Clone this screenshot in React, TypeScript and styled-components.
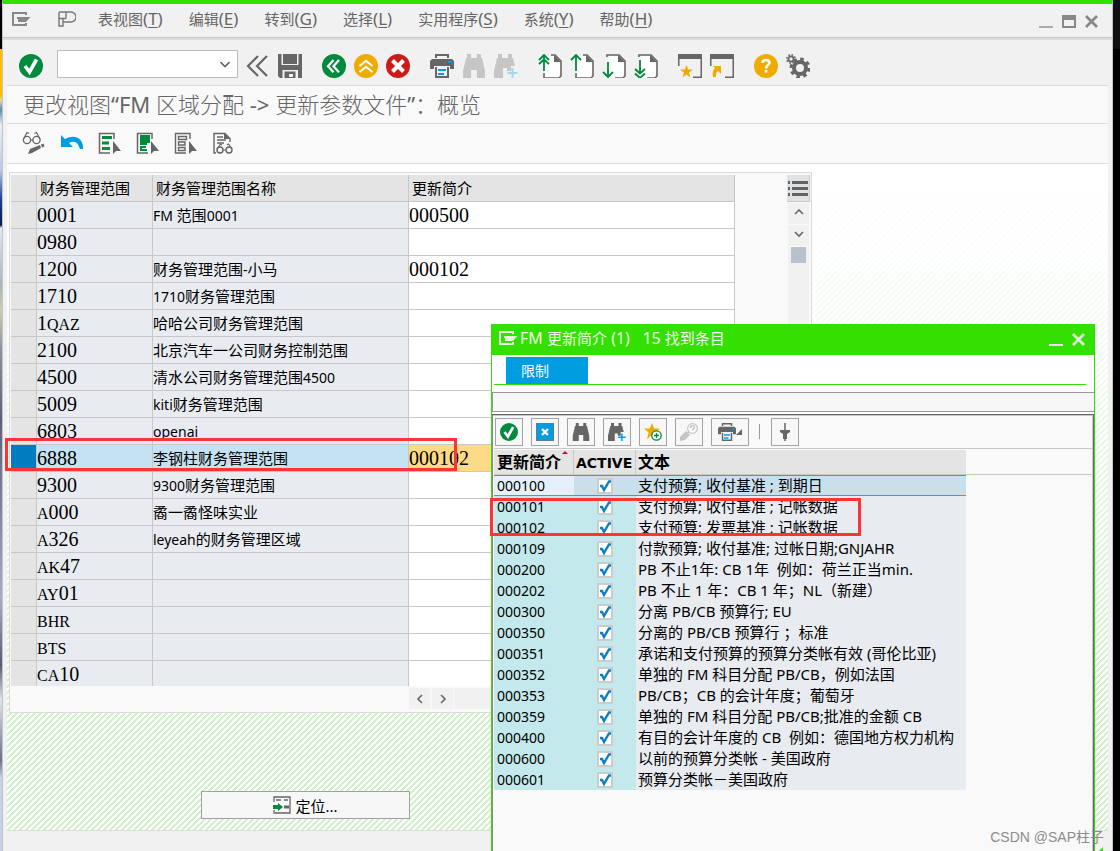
import React from 'react';
import styled, { createGlobalStyle, css } from 'styled-components';

const GREEN = '#33e000';
const INK = '#666';

const GlobalStyle = createGlobalStyle`
  * { box-sizing: border-box; }
  html { background: #000; }
  body {
    margin: 0;
    font-family: "Noto Sans", "Noto Sans CJK SC", sans-serif;
    font-size: 15px;
    color: #000;
  }
  button, input { font: inherit; color: inherit; margin: 0; }
  svg { display: block; flex: none; }
`;

/* ---------- text ---------- */

const Latin = styled.span<{ $size: number }>`
  font-size: ${p => p.$size}px;
  font-weight: 400;
`;

const CJK_SPLIT = /([\u2E80-\u9FFF\u3000-\u303F\uFF00-\uFFEF]+)/;

/* Latin runs are sized apart from the Chinese characters beside them. */
function Mixed({ text, latin = 14 }: { text: string; latin?: number }) {
  return (
    <>
      {text.split(CJK_SPLIT).map((run, i) =>
        i % 2 ? run : run && <Latin key={i} $size={latin}>{run}</Latin>
      )}
    </>
  );
}

const CodeText = styled.div`
  height: 24px;
  font: 20px/24px "Liberation Serif", serif;
`;
const CodeLetters = styled.span`
  font-size: 16px;
  line-height: 16px;
`;

function Code({ value }: { value: string }) {
  return (
    <CodeText>
      {value.split(/([A-Z]+)/).map((run, i) => (i % 2 ? <CodeLetters key={i}>{run}</CodeLetters> : run))}
    </CodeText>
  );
}

/* ---------- window frame ---------- */

const Desktop = styled.div`
  min-height: 100vh;
  display: flex;
  padding-right: 7px;
  background:
    linear-gradient(#111 0 49px, #000 49px) right / 7px 100% no-repeat,
    linear-gradient(#000 0 49px, #fdbf00 49px 96px, #e4d9b0 100px, #5f87b5 110px, #e9eef5 125px,
      #b8cbe6 170px, #1d3c8c 200px, #0c1c4c 225px, #dfe8f5 228px, #aab4bd 285px, #c8cfae 310px,
      #8b93a3 350px, #5a6478 420px, #79839a 500px, #a5aec0 600px, #555c70 665px, #dfe5ee 700px,
      #6a7286 760px, #c4d3ea 778px);
`;

const Window = styled.main`
  position: relative;
  flex: 1;
  min-width: 0;
  margin-left: 2px;
  display: flex;
  flex-direction: column;
  background: #f1f1f1;
  border: solid #c4c4c4;
  border-width: 4px 1px 0;
  border-top-color: ${GREEN};
`;

const MenuBar = styled.header`
  display: flex;
  align-items: center;
  height: 36px;
  padding: 0 14px 4px 9px;
  border-bottom: 2px solid #dcdcdc;
  box-shadow: inset 0 -1px 0 #c6c6c6;
  color: ${INK};
`;

const MenuList = styled.nav`
  display: flex;
  flex: 1;
  gap: 26px;
  margin-left: 22px;
`;

const PlainButton = styled.button`
  display: flex;
  align-items: center;
  justify-content: center;
  padding: 0;
  border: 0;
  background: none;
  white-space: nowrap;
`;

const MenuButton = styled(PlainButton)`
  line-height: 24px;
  u { text-underline-offset: 2px; }
`;

const LogoSlot = styled.div`
  margin-left: 27px;
`;

const Controls = styled.div`
  display: flex;
  align-items: center;
  gap: 9px;
  padding-top: 4px;
`;

const StandardBar = styled.div`
  display: flex;
  align-items: center;
  gap: 20px;
  height: 45px;
  padding: 6px 16px 0;
`;

const IconGroup = styled.div`
  display: flex;
  align-items: center;
  gap: 8px;
`;

const CommandGroup = styled(IconGroup)`
  > :first-child { margin-right: 6px; }
`;

const CommandBox = styled.div`
  display: flex;
  width: 181px;
  height: 28px;
  margin-top: -4px;
  background: #fff;
  border: 1px solid #bdbdbd;
`;

const CommandInput = styled.input`
  flex: 1;
  min-width: 0;
  border: 0;
  background: none;
  outline: none;
`;

const ArrowButton = styled(PlainButton)`
  width: 24px;
`;

const Client = styled.section`
  flex: 1;
  display: flex;
  flex-direction: column;
  margin: 0 4px;
  border: solid #dcdcdc;
  border-width: 1px 0;
`;

const Title = styled.h1`
  margin: 0;
  padding-left: 16px;
  height: 38px;
  border-bottom: 1px solid #dcdcdc;
  background: #f9f9f9;
  color: ${INK};
  font-size: 22px;
  line-height: 36px;
  font-weight: 300;
  white-space: pre;
`;

const AppBar = styled.div`
  display: flex;
  align-items: center;
  gap: 14px;
  height: 40px;
  padding: 0 0 2px 15px;
  border-bottom: 1px solid #dcdcdc;
  background: #f9f9f9;
`;

const Work = styled.div`
  flex: 1;
  padding: 8px 2px 11px;
  background:
    linear-gradient(#fff, rgba(255, 255, 255, 0.85) 20%, rgba(255, 255, 255, 0) 78%),
    linear-gradient(135deg, #d2f2cd 25%, #fff 25% 50%, #d2f2cd 50% 75%, #fff 75%) 0 0 / 6px 6px;
`;

const StatusBar = styled.footer`
  display: flex;
  justify-content: flex-end;
  align-items: flex-end;
  height: 22px;
  padding-right: 9px;
`;

/* ---------- main table ---------- */

const Panel = styled.div`
  display: grid;
  grid-template-columns: 724px 1fr 23px;
  width: 100%;
  max-width: 803px;
  padding: 2px 1px 1px;
  border: 1px solid #dadada;
  background: #f9f9f9;
`;

const GridTable = styled.table`
  width: 724px;
  table-layout: fixed;
  border-collapse: separate;
  border-spacing: 0;
  white-space: pre;
`;

const cell = css`
  height: 27px;
  padding: 0;
  border: solid #c8c8c8;
  border-width: 0 1px 1px 0;
  text-align: left;
  font-weight: 400;
  line-height: 24px;
`;

const HeadCell = styled.th`
  ${cell}
  padding-left: 3px;
  background: #e4e4e4;
`;

const Cell = styled.td<{ $bg?: string }>`
  ${cell}
  background: ${p => p.$bg || '#e8ecf0'};
`;

const BodyRow = styled.tr`
  &:last-child td { height: 25px; border-bottom: 0; }
`;

const RowSelector = styled(PlainButton)`
  width: 100%;
  height: 24px;
`;

const ProfileInput = styled.input`
  display: block;
  width: 100%;
  height: 24px;
  padding: 0;
  border: 0;
  background: none;
  outline: none;
  font: 20px/24px "Liberation Serif", serif;
`;

const VScroll = styled.div`
  display: flex;
  flex-direction: column;
  gap: 1px;
`;

const ScrollButton = styled(PlainButton)`
  width: 21px;
  height: 21px;
  margin-left: 1px;
  background: #f1f1f1;
`;

const ListButton = styled(ScrollButton)`
  width: 23px;
  height: 27px;
  margin-left: 0;
  padding-top: 2px;
  background: #e2e2e2;
  border: solid #c8c8c8;
  border-width: 0 1px 1px 0;
`;

const VTrack = styled.div`
  flex: 1;
  width: 21px;
  margin-left: 1px;
  padding: 0 3px;
  background: #f1f1f1;
`;

const Thumb = styled.div`
  height: 16px;
  background: #b8c2cc;
`;

const HScroll = styled.div`
  display: flex;
  gap: 1px;
  padding: 2px 0 2px 397px;
`;

const HTrack = styled.div`
  flex: 1;
  background: #f1f1f1;
`;

const GotoButton = styled.button`
  display: flex;
  align-items: center;
  justify-content: center;
  gap: 4px;
  width: 209px;
  height: 28px;
  margin: 78px 0 0 192px;
  padding: 0;
  border: 1px solid #a0a0a0;
  background: #f7f7f7;
`;

/* ---------- search help dialog ---------- */

const Dialog = styled.section`
  position: absolute;
  left: 488px;
  top: 320px;
  right: 17px;
  bottom: 0;
  display: flex;
  flex-direction: column;
  background: #fff;
  border: solid ${GREEN};
  border-width: 0 1px;
`;

const DialogTitle = styled.header`
  display: flex;
  align-items: center;
  height: 31px;
  padding: 0 9px 4px 7px;
  background: ${GREEN};
  color: #eefbe8;
  white-space: pre;
  h2 {
    flex: 1;
    margin: 0 0 0 2px;
    font-size: 15px;
    line-height: 24px;
    font-weight: 400;
  }
`;

const TabStrip = styled.div`
  margin: 0 8px 7px 2px;
  padding: 2px 0 0 12px;
  border-bottom: 1px solid ${GREEN};
`;

const Tab = styled(PlainButton)`
  justify-content: flex-start;
  width: 82px;
  height: 27px;
  padding: 0 0 2px 15px;
  background: #009de0;
  color: #fff;
  font-size: 14px;
`;

const Strip = styled.div`
  height: 20px;
  border: solid #999;
  border-width: 1px 0 1px 1px;
  background: #f7f7f7;
`;

const ResultFrame = styled.div`
  flex: 1;
  margin-top: 2px;
  border: 1px solid #666;
  border-bottom: 0;
  border-left-color: #8a8a8a;
  background: #f9f9f9;
  box-shadow: inset 0 1px 0 #c8c8c8, inset -1px 0 0 #c8c8c8;
`;

const ResultBar = styled.div`
  display: flex;
  align-items: center;
  gap: 8px;
  height: 34px;
  margin: 0 1px;
  padding: 1px;
  border-bottom: 1px solid #c8c8c8;
`;

const BoxButton = styled(PlainButton)<{ $wide?: boolean }>`
  width: ${p => (p.$wide ? 38 : 28)}px;
  height: 28px;
  border: 1px solid #a3a3a3;
  background: #f7f7f7;
`;

const Separator = styled.i`
  width: 1px;
  height: 15px;
  margin: 0 3px 0 2px;
  background: #999;
`;

const ResultScroll = styled.div`
  margin: 1px 1px 0;
  background: linear-gradient(#c8c8c8, #c8c8c8) 0 24px / 100% 1px no-repeat;
`;

const ResultTable = styled.table`
  width: 472px;
  table-layout: fixed;
  border-collapse: separate;
  border-spacing: 0;
  white-space: pre;
`;

const ResultHead = styled.th`
  height: 25px;
  padding: 0 0 0 2px;
  background: #e4e4e4;
  border: solid #c8c8c8;
  border-width: 0 1px 1px 0;
  text-align: left;
  font-size: 16px;
  line-height: 22px;
  font-weight: 700;
  &:last-child { border-right: 0; }
`;

const Active = styled.span`
  font: 700 14px/22px "DejaVu Sans", sans-serif;
`;

const SortHead = styled.div`
  display: flex;
  align-items: flex-start;
  padding-left: 1px;
  gap: 1px;
`;

const ResultCell = styled.td<{ $bg: string; $mark?: boolean }>`
  height: 21px;
  padding: 0 0 0 3px;
  background: ${p => p.$bg};
  line-height: 19px;
  &:nth-child(2) { padding: 0; }
  &:nth-child(3) { padding-left: 2px; }
  ${p => p.$mark && css`
    box-shadow: inset 0 1px 0 #d0703a, inset 0 -1px 0 #d0703a;
  `}
`;

const CheckWrap = styled.label`
  display: grid;
  width: 16px;
  margin: 1px auto 0;
  > * { grid-area: 1 / 1; }
  svg { pointer-events: none; }
`;

const CheckBox = styled.input`
  appearance: none;
  width: 16px;
  height: 16px;
  border: 2px solid #ccc;
  background: #fff;
`;

/* ---------- overlays ---------- */

const Marker = styled.div<{ $x: number; $y: number; $w: number; $h: number }>`
  position: absolute;
  left: ${p => p.$x}px;
  top: ${p => p.$y}px;
  width: ${p => p.$w}px;
  height: ${p => p.$h}px;
  border: 3px solid #fb3535;
  pointer-events: none;
`;

const Watermark = styled.div`
  position: absolute;
  right: 8px;
  bottom: 6px;
  color: #8c8c8c;
  font: 14px/20px "Liberation Sans", "Noto Sans CJK SC", sans-serif;
`;

/* ---------- icons ---------- */

type IconProps = { size?: number };
const Svg = ({ size = 24, children }: React.PropsWithChildren<IconProps>) => (
  <svg width={size} height={size} viewBox="0 0 24 24" fill="none">{children}</svg>
);

const ExitIcon = ({ color = '#888' }: { color?: string }) => (
  <svg width="19" height="14" viewBox="0 0 19 14" fill="none">
    <path d="M14 3V1H1v12h13v-2" stroke={color} strokeWidth="2" />
    <path d="M5 5h13.500l-4.500 5H6V7H5z" fill={color} />
  </svg>
);
const LogoIcon = () => (
  <svg width="18" height="16" viewBox="0 0 18 16" fill="none" stroke="#777" strokeWidth="1.4">
    <path d="M1 1h12a4.500 4.500 0 010 10H8M1 1v14h4V7.500M8 1v6.500M1 7.500h7M5 15v-4h4" />
  </svg>
);
const OkIcon = ({ size }: IconProps) => (
  <Svg size={size}><circle cx="12" cy="12" r="12" fill="#008a3b" /><path d="M6 12l4.500 6L17.500 5.500" stroke="#fff" strokeWidth="3.600" /></Svg>
);
const DoubleLeftIcon = () => (
  <Svg><path d="M12 2L2 12l10 10M21 2L11 12l10 10" stroke={INK} strokeWidth="2.200" /></Svg>
);
const SaveIcon = () => (
  <Svg><path d="M0 0h3.500v11h17V0H24v24h-4v-8H4.500v8H2l-2-2z" fill={INK} /><path d="M5 0h14v10H5z" fill={INK} /><path d="M6.500 24v-6.500h11V24h-2.500v-4h-4v3h5v1z" fill={INK} /></Svg>
);
const BackIcon = () => (
  <Svg><circle cx="12" cy="12" r="12" fill="#008a3b" /><path d="M11.500 6L6 12.200l5.500 6M17 6l-5.500 6.200 5.500 6" stroke="#fff" strokeWidth="2.300" /></Svg>
);
const UpIcon = () => (
  <Svg><circle cx="12" cy="12" r="12" fill="#f0ab00" /><path d="M5.500 12L12 7l6.500 5M5.500 18l6.500-5 6.500 5" stroke="#fff" strokeWidth="2.200" /></Svg>
);
const CancelIcon = () => (
  <Svg><circle cx="12" cy="12" r="12" fill="#cc1a1a" /><path d="M6.500 6.500l11 11m0-11l-11 11" stroke="#fff" strokeWidth="4" /></Svg>
);
const PrintIcon = ({ size }: IconProps) => (
  <Svg size={size}><path d="M5 0h14v4h-2V2H7v2H5zM2 5h20l2 2v8h-4v-3H4v3H0V7z" fill={INK} /><path d="M18 7h4v2h-4zM8 15h8v2H8zM8 19h6v2H8z" fill="#009de0" /><path d="M6 13v10h12V13" stroke={INK} strokeWidth="2" /></Svg>
);
const FindIcon = ({ size, color = '#c6c6c6' }: IconProps & { color?: string }) => (
  <Svg size={size}><path d="M5 0h4v4h6V0h4v4h1l3 13v7h-8v-8H9v8H1v-7L4 4h1z" fill={color} /></Svg>
);
const FindNextIcon = ({ size, color = '#c6c6c6', plus = '#9fd8f3' }: IconProps & { color?: string; plus?: string }) => (
  <Svg size={size}><path d="M4 0h4v4h6V0h4v4h1l2 8h-4v5h-4v-3H9v10H0v-7L3 4h1z" fill={color} /><path d="M18.500 14v10M13.500 19h10" stroke={plus} strokeWidth="2" /></Svg>
);
const PageIcon = ({ down, twice }: { down?: boolean; twice?: boolean }) => (
  <Svg>
    <path d="M7 2h12l5 5v17H6V12z" fill="#fff" />
    <path d={down ? 'M5 3V1h12l6 6v15l-2 2h-8' : 'M13 1h4l6 6v15l-2 2H6v-5'} stroke={INK} strokeWidth="1.600" />
    <path d="M16 1l7 7h-7z" fill={INK} />
    {down
      ? <path d={twice ? 'M6 6v13M1 15l5 4.500 5-4.500M1 19.500L6 24l5-4.500' : 'M6 8v15M1 18l5 5 5-5'} stroke="#008a3b" strokeWidth="1.800" />
      : <path d={twice ? 'M6 2v15M1 6l5-5 5 5M1 10l5-4.500L11 10' : 'M6 1v16M1 6l5-5 5 5'} stroke="#008a3b" strokeWidth="1.800" />}
  </Svg>
);
const WindowIcon = ({ link }: { link?: boolean }) => (
  <Svg>
    <path d="M0 0h24v24h-9v-1.500h7.500V5H1.500v7H0z" fill={INK} />
    {link
      ? <path d="M3 12h8v8l-3-3c-2 1-2 3-2 6H3c-1-4 0-7 2-9z" fill="#f0ab00" />
      : <path d="M8.500 11l1.600 4.500H15l-4 3 1.500 5-4-3-4 3 1.500-5-4-3h4.900z" fill="#f0ab00" />}
  </Svg>
);
const HelpIcon = () => (
  <Svg><circle cx="12" cy="12" r="12" fill="#f0ab00" /><path d="M8.500 9c0-4 7-4 7-.500 0 2.500-3.500 2.500-3.500 6M12 16v2.500" stroke="#fff" strokeWidth="2.600" /></Svg>
);
const GearIcon = () => (
  <Svg>
    <circle cx="14" cy="14" r="6" stroke={INK} strokeWidth="4" />
    <circle cx="14" cy="14" r="9" stroke={INK} strokeWidth="3" strokeDasharray="3.530 3.530" />
    <circle cx="5" cy="5" r="2.600" stroke={INK} strokeWidth="1.800" />
    <circle cx="5" cy="5" r="4.200" stroke={INK} strokeWidth="1.600" strokeDasharray="1.650 1.650" />
  </Svg>
);
const Chevron = ({ d }: { d: string }) => (
  <svg width="10" height="10" viewBox="0 0 10 10" fill="none"><path d={d} stroke="#666" strokeWidth="1.600" /></svg>
);
const GlassesEditIcon = () => (
  <Svg>
    <circle cx="5" cy="9" r="3.600" stroke={INK} strokeWidth="1.300" /><circle cx="14.500" cy="9" r="3.600" stroke={INK} strokeWidth="1.300" />
    <path d="M1.500 8L5 1.500l2 1M18 8l-3.500-6.500-2 1M8.500 9H11" stroke={INK} strokeWidth="1.200" />
    <path d="M6 23l2-5 10-4 1 3-9 5zM19 13.500l2.500-1 1 3-2.500 1z" fill={INK} />
  </Svg>
);
const UndoIcon = () => (
  <Svg><path d="M1 4v12h12l-4-4c5-3 9-1 11 6h3C24 9 16 2 5 8z" fill="#009de0" /></Svg>
);
const Pointer = () => <path d="M15 10v13l3-3h5z" fill={INK} />;
const SelectAllIcon = () => (
  <Svg><path d="M16 8V2.500H1.500V22H12" stroke={INK} strokeWidth="1.500" /><path d="M4 5h10v3H4zM4 10.500h7v3H4zM4 16h8v3H4z" fill="#008a3b" /><Pointer /></Svg>
);
const SelectBlockIcon = () => (
  <Svg><path d="M16 8V2.500H1.500V22H12" stroke={INK} strokeWidth="1.500" /><path d="M4 4h10v8h-3v2H4zM4 15h6v2H6v1h5v2H4z" fill="#008a3b" /><Pointer /></Svg>
);
const DeselectIcon = () => (
  <Svg><path d="M16 8V2.500H1.500V22H12M4.500 5.500h8v3h-8zM4.500 11h6.500v3H4.500zM4.500 16.500h6.500v3H4.500z" stroke={INK} strokeWidth="1.400" /><Pointer /></Svg>
);
const DocGlassesIcon = () => (
  <Svg>
    <path d="M4 22H2V2.500h11l5 5V11M5 6h6M5 9h9M5 12h7" stroke={INK} strokeWidth="1.400" /><path d="M12 2l6 6h-6z" fill={INK} />
    <circle cx="8" cy="19" r="3" stroke={INK} strokeWidth="1.400" /><circle cx="17" cy="19" r="3" stroke={INK} strokeWidth="1.400" />
    <path d="M5 18l3.500-5 1.500 1M20 18l-3.500-5-1.500 1M11 19h3" stroke={INK} strokeWidth="1.200" />
  </Svg>
);
const ListIcon = () => (
  <svg width="20" height="16" viewBox="0 0 20 16"><path d="M0 0h2v3H0zM4 0h16v3H4zM0 6h2v3H0zM4 6h16v3H4zM0 12h2v3H0zM4 12h16v3H4z" fill="#5f6468" /></svg>
);
const GotoIcon = () => (
  <svg width="18" height="18" viewBox="0 0 18 18" fill="none"><path d="M1 6V1h16v16H1v-3" stroke={INK} strokeWidth="1.300" /><path d="M3 4h5M11 4h4" stroke={INK} strokeWidth="1.500" /><path d="M11 11h5" stroke={INK} strokeWidth="3" /><path d="M0 9h5V7l5 4-5 4v-2H0z" fill="#008a3b" /></svg>
);
const CloseIcon = ({ color = '#888' }: { color?: string }) => (
  <svg width="13" height="13" viewBox="0 0 13 13"><path d="M1 1l11 11M12 1L1 12" stroke={color} strokeWidth="2.800" /></svg>
);
const MinIcon = ({ color = '#aaa' }: { color?: string }) => (
  <svg width="14" height="13" viewBox="0 0 14 13"><path d="M0 11h14v2H0z" fill={color} /></svg>
);
const MaxIcon = () => (
  <svg width="14" height="13" viewBox="0 0 14 13" fill="none"><path d="M1 1h12v11H1z" stroke="#888" strokeWidth="2" /><path d="M0 0h14v5H0z" fill="#888" /></svg>
);
const CloseBoxIcon = () => (
  <svg width="18" height="18" viewBox="0 0 18 18"><path d="M0 0h18v18H0z" fill="#5b7f99" /><path d="M1 1h16v16H1z" fill="#009de0" /><path d="M6 6l6 6m0-6l-6 6" stroke="#fff" strokeWidth="2.400" /></svg>
);
const StarPlusIcon = () => (
  <svg width="18" height="18" viewBox="0 0 18 18"><path d="M8 0l2.200 5.500H16l-4.500 3.800L13 16l-5-4-5 4 1.600-6.500L0 5.500h5.800z" fill="#f0ab00" /><circle cx="12.500" cy="12.500" r="4.700" fill="#fff" stroke="#008a3b" strokeWidth="1.300" /><path d="M12.500 10v5M10 12.500h5" stroke="#008a3b" strokeWidth="1.300" /></svg>
);
const WrenchHelpIcon = () => (
  <svg width="18" height="18" viewBox="0 0 18 18" fill="none"><path d="M0 18v-4l6-6 4 4-5 5z" fill="#c4c4c4" /><circle cx="12.500" cy="5.500" r="4.800" fill="#fff" stroke="#c4c4c4" strokeWidth="1.300" /><path d="M10.500 5c0-3 4-3 4-.500 0 1.500-2 1.500-2 3M9 9l-2 2" stroke="#c4c4c4" strokeWidth="1.600" /></svg>
);
const PinIcon = () => (
  <svg width="10" height="18" viewBox="0 0 10 18"><path d="M5 0v18" stroke={INK} strokeWidth="1.500" /><path d="M0 7h10v2L7 11v5H3v-5L0 9z" fill={INK} /></svg>
);
const MenuCorner = () => (
  <svg width="6" height="6" viewBox="0 0 6 6"><path d="M6 0v6H0z" fill={INK} /></svg>
);
const SortMark = () => (
  <svg width="6" height="3" viewBox="0 0 6 3"><path d="M3 0l3 3H0z" fill="#c8102e" /></svg>
);
const CheckMark = () => (
  <svg width="16" height="16" viewBox="0 0 16 16" fill="none"><path d="M3 8h2l2 4 5-8.500h2" stroke="#0a80c4" strokeWidth="2.400" /></svg>
);
const Grip = () => (
  <svg width="6" height="6" viewBox="0 0 6 6"><path d="M6 0v6H0z" fill={GREEN} /></svg>
);

/* ---------- data ---------- */

const menus: [string, string][] = [
  ['表视图', 'T'], ['编辑', 'E'], ['转到', 'G'], ['选择', 'L'], ['实用程序', 'S'], ['系统', 'Y'], ['帮助', 'H'],
];

const toolGroups: [string, React.ReactNode][][] = [
  [['返回', <BackIcon />], ['退出', <UpIcon />], ['取消', <CancelIcon />]],
  [['打印', <PrintIcon />], ['查找', <FindIcon />], ['查找下一个', <FindNextIcon />]],
  [['首页', <PageIcon twice />], ['上一页', <PageIcon />], ['下一页', <PageIcon down />], ['末页', <PageIcon down twice />]],
  [['新建窗口', <WindowIcon />], ['生成快捷方式', <WindowIcon link />]],
  [['帮助', <HelpIcon />], ['设置', <GearIcon />]],
];

const appTools: [string, React.ReactNode][] = [
  ['显示/更改', <GlassesEditIcon />], ['撤消', <UndoIcon />], ['全选', <SelectAllIcon />],
  ['选择块', <SelectBlockIcon />], ['取消全选', <DeselectIcon />], ['详细信息', <DocGlassesIcon />],
];

const areas: [string, string, string][] = [
  ['0001', 'FM 范围0001', '000500'],
  ['0980', '', ''],
  ['1200', '财务管理范围-小马', '000102'],
  ['1710', '1710财务管理范围', ''],
  ['1QAZ', '哈哈公司财务管理范围', ''],
  ['2100', '北京汽车一公司财务控制范围', ''],
  ['4500', '清水公司财务管理范围4500', ''],
  ['5009', 'kiti财务管理范围', ''],
  ['6803', 'openai', ''],
  ['6888', '李钢柱财务管理范围', '000102'],
  ['9300', '9300财务管理范围', ''],
  ['A000', '矞一矞怪味实业', ''],
  ['A326', 'leyeah的财务管理区域', ''],
  ['AK47', '', ''],
  ['AY01', '', ''],
  ['BHR', '', ''],
  ['BTS', '', ''],
  ['CA10', '', ''],
];

const profiles: [string, string][] = [
  ['000100', '支付预算; 收付基准 ; 到期日'],
  ['000101', '支付预算; 收付基准 ; 记帐数据'],
  ['000102', '支付预算; 发票基准 ; 记帐数据'],
  ['000109', '付款预算; 收付基准; 过帐日期;GNJAHR'],
  ['000200', 'PB 不止1年: CB 1年  例如：荷兰正当min.'],
  ['000202', 'PB 不止 1 年：CB 1 年；NL（新建）'],
  ['000300', '分离 PB/CB 预算行; EU'],
  ['000350', '分离的 PB/CB 预算行 ；标准'],
  ['000351', '承诺和支付预算的预算分类帐有效 (哥伦比亚)'],
  ['000352', '单独的 FM 科目分配 PB/CB，例如法国'],
  ['000353', 'PB/CB；CB 的会计年度；葡萄牙'],
  ['000359', '单独的 FM 科目分配 PB/CB;批准的金额 CB'],
  ['000400', '有目的会计年度的 CB  例如：德国地方权力机构'],
  ['000600', '以前的预算分类帐 - 美国政府'],
  ['000601', '预算分类帐－美国政府'],
];

/* ---------- parts ---------- */

function AreaTable() {
  return (
    <GridTable>
      <colgroup>
        <col style={{ width: 26 }} /><col style={{ width: 116 }} /><col style={{ width: 256 }} /><col />
      </colgroup>
      <thead>
        <tr>
          <HeadCell aria-label="行选择" />
          <HeadCell>财务管理范围</HeadCell>
          <HeadCell>财务管理范围名称</HeadCell>
          <HeadCell>更新简介</HeadCell>
        </tr>
      </thead>
      <tbody>
        {areas.map(([id, name, profile]) => {
          const selected = id === '6888';
          const bg = selected ? '#c5e2f2' : undefined;
          return (
            <BodyRow key={id}>
              <Cell $bg={selected ? '#007cc0' : '#e4e4e4'}><RowSelector aria-label={`选择 ${id}`} /></Cell>
              <Cell $bg={bg}><Code value={id} /></Cell>
              <Cell $bg={bg}><Mixed text={name} /></Cell>
              <Cell $bg={selected ? '#fddb84' : '#fff'}>
                <ProfileInput aria-label={`更新简介 ${id}`} defaultValue={profile} />
              </Cell>
            </BodyRow>
          );
        })}
      </tbody>
    </GridTable>
  );
}

function ResultRow({ code, text, first }: { code: string; text: string; first: boolean }) {
  return (
    <tr>
      <ResultCell $bg={first ? '#e4f1fb' : '#c3e9ec'} $mark={first}><Mixed text={code} /></ResultCell>
      <ResultCell $bg={first ? '#c8e0ec' : '#c3e9ec'} $mark={first}>
        <CheckWrap><CheckBox type="checkbox" defaultChecked aria-label={`ACTIVE ${code}`} /><CheckMark /></CheckWrap>
      </ResultCell>
      <ResultCell $bg={first ? '#c8e0ec' : '#e8ecf0'} $mark={first}><Mixed text={text} latin={15} /></ResultCell>
    </tr>
  );
}

function ProfileDialog() {
  return (
    <Dialog role="dialog" aria-label="FM 更新简介">
      <DialogTitle>
        <ExitIcon color="#e4f6dd" />
        <h2><Mixed text="FM 更新简介 (1)   15 找到条目" latin={16} /></h2>
        <Controls>
          <PlainButton aria-label="最小化"><MinIcon color="#e0e8dc" /></PlainButton>
          <PlainButton aria-label="关闭"><CloseIcon color="#e0e8dc" /></PlainButton>
        </Controls>
      </DialogTitle>
      <TabStrip><Tab>限制</Tab></TabStrip>
      <Strip />
      <ResultFrame>
        <ResultBar>
          <BoxButton aria-label="确认"><OkIcon size={18} /></BoxButton>
          <BoxButton aria-label="关闭"><CloseBoxIcon /></BoxButton>
          <BoxButton aria-label="查找"><FindIcon size={18} color={INK} /></BoxButton>
          <BoxButton aria-label="查找下一个"><FindNextIcon size={18} color={INK} plus="#009de0" /></BoxButton>
          <BoxButton aria-label="加入收藏"><StarPlusIcon /></BoxButton>
          <BoxButton aria-label="技术帮助"><WrenchHelpIcon /></BoxButton>
          <BoxButton aria-label="打印" $wide><PrintIcon size={18} /><MenuCorner /></BoxButton>
          <Separator />
          <BoxButton aria-label="固定"><PinIcon /></BoxButton>
        </ResultBar>
        <ResultScroll>
          <ResultTable>
            <colgroup>
              <col style={{ width: 80 }} /><col style={{ width: 62 }} /><col />
            </colgroup>
            <thead>
              <tr>
                <ResultHead><SortHead>更新简介<SortMark /></SortHead></ResultHead>
                <ResultHead><Active>ACTIVE</Active></ResultHead>
                <ResultHead>文本</ResultHead>
              </tr>
            </thead>
            <tbody>
              {profiles.map(([code, text], i) => (
                <ResultRow key={code} code={code} text={text} first={i === 0} />
              ))}
            </tbody>
          </ResultTable>
        </ResultScroll>
      </ResultFrame>
    </Dialog>
  );
}

export default function App() {
  return (
    <Desktop>
      <GlobalStyle />
      <Window>
        <MenuBar>
          <ExitIcon />
          <LogoSlot><LogoIcon /></LogoSlot>
          <MenuList>
            {menus.map(([label, key]) => (
              <MenuButton key={key}>{label}<Latin $size={17}>(<u>{key}</u>)</Latin></MenuButton>
            ))}
          </MenuList>
          <Controls>
            <PlainButton aria-label="最小化"><MinIcon /></PlainButton>
            <PlainButton aria-label="最大化"><MaxIcon /></PlainButton>
            <PlainButton aria-label="关闭"><CloseIcon /></PlainButton>
          </Controls>
        </MenuBar>

        <StandardBar>
          <CommandGroup>
            <PlainButton aria-label="回车"><OkIcon /></PlainButton>
            <CommandBox>
              <CommandInput aria-label="命令" />
              <ArrowButton aria-label="命令历史"><Chevron d="M0.500 3L5 7.500 9.500 3" /></ArrowButton>
            </CommandBox>
            <PlainButton aria-label="收起"><DoubleLeftIcon /></PlainButton>
            <PlainButton aria-label="保存"><SaveIcon /></PlainButton>
          </CommandGroup>
          {toolGroups.map((group, i) => (
            <IconGroup key={i}>
              {group.map(([label, icon]) => (
                <PlainButton key={label} aria-label={label}>{icon}</PlainButton>
              ))}
            </IconGroup>
          ))}
        </StandardBar>

        <Client>
          <Title><Mixed text="更改视图“FM 区域分配 -> 更新参数文件”：概览" latin={22} /></Title>
          <AppBar>
            {appTools.map(([label, icon]) => (
              <PlainButton key={label} aria-label={label}>{icon}</PlainButton>
            ))}
          </AppBar>
          <Work>
            <Panel>
              <AreaTable />
              <span />
              <VScroll>
                <ListButton aria-label="表设置"><ListIcon /></ListButton>
                <ScrollButton aria-label="向上"><Chevron d="M1 5l4-4 4 4" /></ScrollButton>
                <ScrollButton aria-label="向下"><Chevron d="M1 1l4 4 4-4" /></ScrollButton>
                <VTrack><Thumb /></VTrack>
              </VScroll>
              <HScroll>
                <ScrollButton aria-label="向左"><Chevron d="M7 1L3 5l4 4" /></ScrollButton>
                <ScrollButton aria-label="向右"><Chevron d="M3 1l4 4-4 4" /></ScrollButton>
                <HTrack />
              </HScroll>
            </Panel>
            <GotoButton><GotoIcon /><span>定位...</span></GotoButton>
          </Work>
        </Client>
        <StatusBar><Grip /></StatusBar>

        <ProfileDialog />
        <Marker $x={2} $y={434} $w={452} $h={33} />
        <Marker $x={487} $y={494} $w={371} $h={38} />
        <Watermark>CSDN @SAP柱子</Watermark>
      </Window>
    </Desktop>
  );
}
